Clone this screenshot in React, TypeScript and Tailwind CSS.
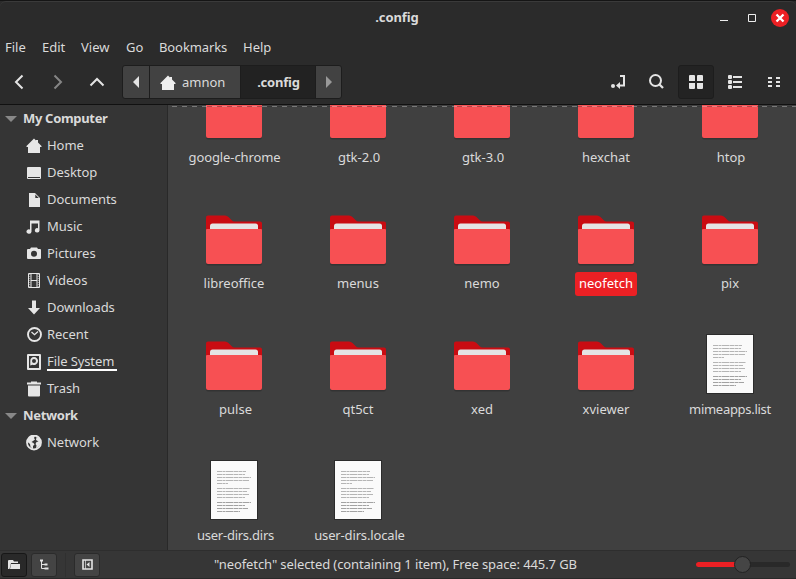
import React from "react";

type Entry = { name: string; kind: "folder" | "file"; selected?: boolean; fit?: string };

const entries: Entry[] = [
  { name: "google-chrome", kind: "folder", fit: "tracking-[-0.1px] pl-px" },
  { name: "gtk-2.0", kind: "folder", fit: "pl-[2px]" },
  { name: "gtk-3.0", kind: "folder", fit: "pl-[2px]" },
  { name: "hexchat", kind: "folder" },
  { name: "htop", kind: "folder", fit: "pl-[2px]" },
  { name: "libreoffice", kind: "folder" },
  { name: "menus", kind: "folder" },
  { name: "nemo", kind: "folder" },
  { name: "neofetch", kind: "folder", selected: true },
  { name: "pix", kind: "folder" },
  { name: "pulse", kind: "folder", fit: "pl-[3px]" },
  { name: "qt5ct", kind: "folder" },
  { name: "xed", kind: "folder" },
  { name: "xviewer", kind: "folder" },
  { name: "mimeapps.list", kind: "file", fit: "tracking-[-0.28px]" },
  { name: "user-dirs.dirs", kind: "file", fit: "tracking-[-0.25px] pl-[3px]" },
  { name: "user-dirs.locale", kind: "file", fit: "tracking-[-0.15px] pl-[3px]" },
];

function Folder() {
  return (
    <svg className="mt-[7px] block" width="58" height="52" viewBox="0 0 58 52">
      <path d="M1 46h56v2.500q0 2-2 2H3q-2 0-2-2z" fill="#333" />
      <path d="M1 2.500q0-2 2-2H20q2 0 3.500 1.500l3 3q1.500 1.500 3 1.500H55q2 0 2 2V24H1z" fill="#c90c12" />
      <path d="M5 15v-4q0-2.500 2.500-2.500h43q2.500 0 2.500 2.500v4z" fill="#e4e4e4" />
      <path d="M1 15q0-1 1-1h54q1 0 1 1v32q0 2-2 2H3q-2 0-2-2z" fill="#f75053" />
    </svg>
  );
}

const lines: [number, number][] = [
  [11, 29], [14, 28], [17, 34], [20, 32], [23, 11],
  [28, 33], [31, 30], [34, 32], [37, 28],
  [42, 34], [45, 28], [48, 31], [51, 23],
];

function TextFile() {
  return (
    <svg className="block" width="48" height="60" viewBox="0 0 48 60">
      <path d="M0 0h48v60H0z" fill="#2b2b2b" />
      <path d="M1 1h46v58H1z" fill="#fafafa" />
      {lines.map(([y, w]) => (
        <path key={y} d={`M7 ${y + 0.5}h${w}`} stroke={y > 40 ? "#a2a2a2" : "#b5b5b5"} strokeDasharray="5 .5 3 .5 7 .5" />
      ))}
    </svg>
  );
}

const HomeShape = () => <path d="M8 .5L.5 8v1H2v6h12V9h1.500V8L12 4.500V2h-2v.5z" />;

const places: { name: string; icon: React.ReactNode }[] = [
  { name: "Home", icon: <HomeShape /> },
  { name: "Desktop", icon: <path d="M2 2h12q1 0 1 1v9H1V3q0-1 1-1zM1 13h14q0 1-1 1H2q-1 0-1-1zM1 12h1v1H1zM14 12h1v1h-1z" /> },
  { name: "Documents", icon: <path fillRule="evenodd" d="M3 1h6l5 5v9H3zM9.300 2.500v3.500h3.500z" /> },
  { name: "Music", icon: <path d="M4 1.500h9.500v10a2.300 2.200 0 1 1-1.500-2.200V4.500H5.500v8.200a2.500 2.200 0 1 1-1.500-2.200z" /> },
  { name: "Pictures", icon: <path fillRule="evenodd" d="M5 1.500h6L12 3h2q1 0 1 1v8q0 1-1 1H2q-1 0-1-1V4q0-1 1-1h2zM8 4.800a3 3 0 1 0 0 6 3 3 0 0 0 0-6z" /> },
  { name: "Videos", icon: <g fill="none" stroke="currentColor"><path d="M2.500.5v14h11v-14zM5 .5v14M11 .5v14M5 7.500h6" /><path d="M3.750 1v14M12.250 1v14" strokeDasharray="1 1" strokeOpacity=".6" /></g> },
  { name: "Downloads", icon: <path d="M6 .5h4v7.500h4l-6 6.500L2 8h4z" /> },
  { name: "Recent", icon: <g fill="none" stroke="currentColor"><circle cx="8.500" cy="7.500" r="6.500" strokeWidth="1.900" /><path d="M5.500 5l3 2.700 3.500-3.200" strokeWidth="1.300" /></g> },
  { name: "File System", icon: <><path fillRule="evenodd" d="M2 0h12q1 0 1 1v14q0 1-1 1H2q-1 0-1-1V1q0-1 1-1zM3 2v12h10V2z" /><path fillRule="evenodd" d="M8 3a4 4 0 1 1-1.500 7.700L4.300 11.500V7A4 4 0 0 1 8 3zM8 5a2 2 0 1 0 0 4 2 2 0 0 0 0-4z" /></> },
  { name: "Trash", icon: <path d="M1 1.500h4v-1h6v1h4v2H1zM2 4.500h12v10q0 1-1 1H3q-1 0-1-1z" /> },
];

function Heading({ children }: { children: React.ReactNode }) {
  return (
    <div className="flex h-[27px] items-center pl-[5px] text-[13px] font-bold tracking-[-0.32px]">
      <svg className="mr-1.5 text-[#888]" width="12" height="6" viewBox="0 0 12 6" fill="currentColor"><path d="M0 0h12L6 6z" /></svg>
      {children}
    </div>
  );
}

function Place({ name, icon }: { name: string; icon: React.ReactNode }) {
  return (
    <div className="flex h-[27px] items-center pl-[26px]">
      <svg className="mr-[5px] shrink-0 text-[#e6e6e6]" width="16" height="16" viewBox="0 0 16 16" fill="currentColor">{icon}</svg>
      <span className={name === "File System" ? "h-[18px] w-[70px] whitespace-nowrap border-b-2 border-white leading-[17px] tracking-[-0.1px]" : "tracking-[-0.03px]"}>{name}</span>
    </div>
  );
}

export default function App() {
  return (
    <div className="flex h-[579px] w-[796px] flex-col overflow-hidden bg-[#2b2b2b] font-['Noto_Sans','Open_Sans',sans-serif] text-[13px] text-[#dadada]">
      <header className="h-[105px] shrink-0 border-b border-t border-b-[#111] border-t-[#151515]">
        <div className="flex h-8 items-center rounded-t-md border-t border-[#3a3a3a]">
          <div className="w-[90px]" />
          <div className="flex-1 pr-[2px] text-center font-bold tracking-[-0.1px]">.config</div>
          <div className="flex w-[90px] items-center">
            <svg width="90" height="20" viewBox="706 7 90 20">
              <path d="M720 19.500h8" stroke="#eee" />
              <path d="M748.500 13.500h7v7h-7z" fill="none" stroke="#eee" />
              <circle cx="780" cy="17" r="9" fill="#ec2024" />
              <path d="M776.500 13.500l7 7m0-7l-7 7" stroke="#fff" strokeWidth="2.300" />
            </svg>
          </div>
        </div>
        <nav className="flex h-[28px] items-center pl-[5px] pt-[2px]">
          <span className="w-[37px]">File</span>
          <span className="w-[39px]">Edit</span>
          <span className="w-[45px]">View</span>
          <span className="w-[33px]">Go</span>
          <span className="w-[84px] tracking-[-0.1px]">Bookmarks</span>
          <span>Help</span>
        </nav>
        <div className="flex h-[42px] items-center">
          <svg className="mr-[17px]" width="105" height="20" viewBox="0 72 105 20" fill="none" stroke="#e4e4e4" strokeWidth="2">
            <path d="M22.500 75.500L16 82l6.500 6.500" />
            <path d="M54.500 75.500L61 82l-6.500 6.500" stroke="#858585" />
            <path d="M90.500 85.500L97 79l6.500 6.500" />
          </svg>
          <div className="flex h-[34px] w-[220px] shrink-0 divide-x divide-[#1d1d1d] overflow-hidden rounded-[3px] border border-[#1d1d1d] bg-[#424242]">
            <div className="flex w-[27px] items-center justify-center"><svg width="6" height="12" viewBox="0 0 6 12" fill="#e4e4e4"><path d="M6 0v12L0 6z" /></svg></div>
            <div className="flex w-[91px] items-center pl-2.5 pt-px">
              <svg className="mr-[6px]" width="16" height="16" viewBox="0 0 16 16" fill="#eee"><HomeShape /></svg>amnon
            </div>
            <div className="flex w-[75px] items-center justify-center bg-[#222] pl-px pt-px font-bold tracking-[-0.2px]">.config</div>
            <div className="flex flex-1 items-center justify-center"><svg width="6" height="12" viewBox="0 0 6 12" fill="#999"><path d="M0 0v12l6-6z" /></svg></div>
          </div>
          <svg className="ml-auto shrink-0" width="190" height="36" viewBox="606 64 190 36" fill="#e4e4e4">
            <rect x="678.500" y="65.500" width="35" height="33" rx="2.500" fill="#232323" stroke="#1d1d1d" />
            <circle cx="613" cy="86" r="2" />
            <path d="M620 76h4v9.500h-6" fill="none" stroke="#e4e4e4" strokeWidth="2" />
            <path d="M620 82v7l-4-3.500z" />
            <circle cx="655.500" cy="80.500" r="5.500" fill="none" stroke="#e4e4e4" strokeWidth="2" />
            <path d="M659 84l4 4" stroke="#e4e4e4" strokeWidth="2.300" />
            <path d="M690 75h4q1 0 1 1v5h-6v-5q0-1 1-1zM697 76q0-1 1-1h4q1 0 1 1v5h-6zM689 83h6v5q0 1-1 1h-4q-1 0-1-1zM697 83h6v5q0 1-1 1h-4q-1 0-1-1z" />
            <rect x="728" y="75" width="4" height="4" rx="1" /><rect x="728" y="80" width="4" height="4" rx="1" /><rect x="728" y="85" width="4" height="4" rx="1" />
            <path d="M733 76h9v2h-9zM733 81h9v2h-9zM733 86h9v2h-9zM768 77h4v2h-4zM768 81h4v2h-4zM768 85h4v2h-4zM776 77h4v2h-4zM776 81h4v2h-4zM776 85h4v2h-4z" />
          </svg>
        </div>
      </header>

      <div className="flex h-[445px] shrink-0">
        <aside className="w-[168px] shrink-0 border-r border-[#292929] bg-[#353535]">
          <Heading>My Computer</Heading>
          {places.map((p) => <Place key={p.name} {...p} />)}
          <Heading>Network</Heading>
          <Place
            name="Network"
            icon={<><circle cx="8" cy="7.500" r="7" fill="none" stroke="currentColor" strokeWidth="1.800" /><path d="M1.500 5L5 1h4L8 3l1 1.500L7 6 5.500 7l2 1 1 1.500L7 11v3L4.500 12l-.5-3-2.500-2zM10.500 2l3 1 1.500 4-1.500 4-3.500 2.500.5-3L9.500 9l1-2 2-.5L10 5z" /></>}
          />
        </aside>
        <main className="relative flex-1 overflow-hidden bg-[#404040]">
          <svg className="absolute left-0 top-0" width="628" height="2" viewBox="0 0 628 2"><path d="M4 1.500h624" stroke="#c8c8c8" strokeOpacity=".42" strokeDasharray="5 5" /><path d="M9 1.500h619" stroke="#222" strokeOpacity=".3" strokeDasharray="5 5" /></svg>
          <div className="-mt-[23px] grid w-[624px] auto-rows-[126px] grid-cols-[repeat(5,124px)] pl-1">
            {entries.map((e) => (
              <div key={e.name} className="flex flex-col items-center">
                <div className="flex h-16 items-start justify-center">{e.kind === "folder" ? <Folder /> : <TextFile />}</div>
                {e.selected ? (
                  <div className="flex h-6 w-[62px] items-center justify-center rounded-[3px] bg-[#ec2024] text-white">{e.name}</div>
                ) : (
                  <div className={`flex h-6 items-center ${e.fit ?? ""}`}>{e.name}</div>
                )}
              </div>
            ))}
          </div>
        </main>
      </div>

      <footer className="flex h-[29px] shrink-0 items-center border-b border-t border-b-[#292929] border-t-[#2e2e2e] bg-[#363636]">
        <div className="ml-px flex h-6 w-[26px] items-center justify-center rounded-[3px] border border-[#171717] bg-[#292929]">
          <svg width="12" height="10" viewBox="0 0 12 10" fill="#e4e4e4"><path d="M0 1q0-1 1-1h4l1 1.500h4V3H3L1.500 9H0zM3 4h9v5H2z" /></svg>
        </div>
        <div className="ml-1 flex h-6 w-[26px] items-center justify-center rounded-[3px] border border-[#2b2b2b] bg-[#444]">
          <svg width="11" height="11" viewBox="0 0 11 11" fill="none" stroke="#e4e4e4"><path d="M2.500 1v8.500H6M2.500 5.500H6" /><path d="M1 1.500h3M5.500 5.500h3M5.500 9.500h4" strokeWidth="2" /></svg>
        </div>
        <div className="ml-2 h-6 w-px bg-[#303030]" />
        <div className="ml-2 flex h-6 w-[26px] items-center justify-center rounded-[3px] border border-[#2b2b2b] bg-[#444]">
          <svg width="11" height="11" viewBox="0 0 11 11"><path d="M1 1h9v9H1z" fill="none" stroke="#e4e4e4" strokeWidth="1.600" /><path d="M3.500 1v9" stroke="#e4e4e4" strokeWidth=".7" /><path d="M7.500 3v5L4.500 5.500z" fill="#e4e4e4" /></svg>
        </div>
        <div className="ml-[114px] whitespace-nowrap pt-px tracking-[-0.1px]">"neofetch" selected (containing 1 item), Free space: 445.7 GB</div>
        <svg className="ml-auto shrink-0" width="106" height="20" viewBox="690 555 106 20">
          <rect x="696" y="562" width="94" height="5" rx="2.500" fill="#292929" />
          <path d="M698.500 562H742v5h-43.500a2.500 2.500 0 0 1 0-5z" fill="#ec2024" />
          <circle cx="742.500" cy="564.500" r="8" fill="#454545" stroke="#222" />
        </svg>
      </footer>
    </div>
  );
}
